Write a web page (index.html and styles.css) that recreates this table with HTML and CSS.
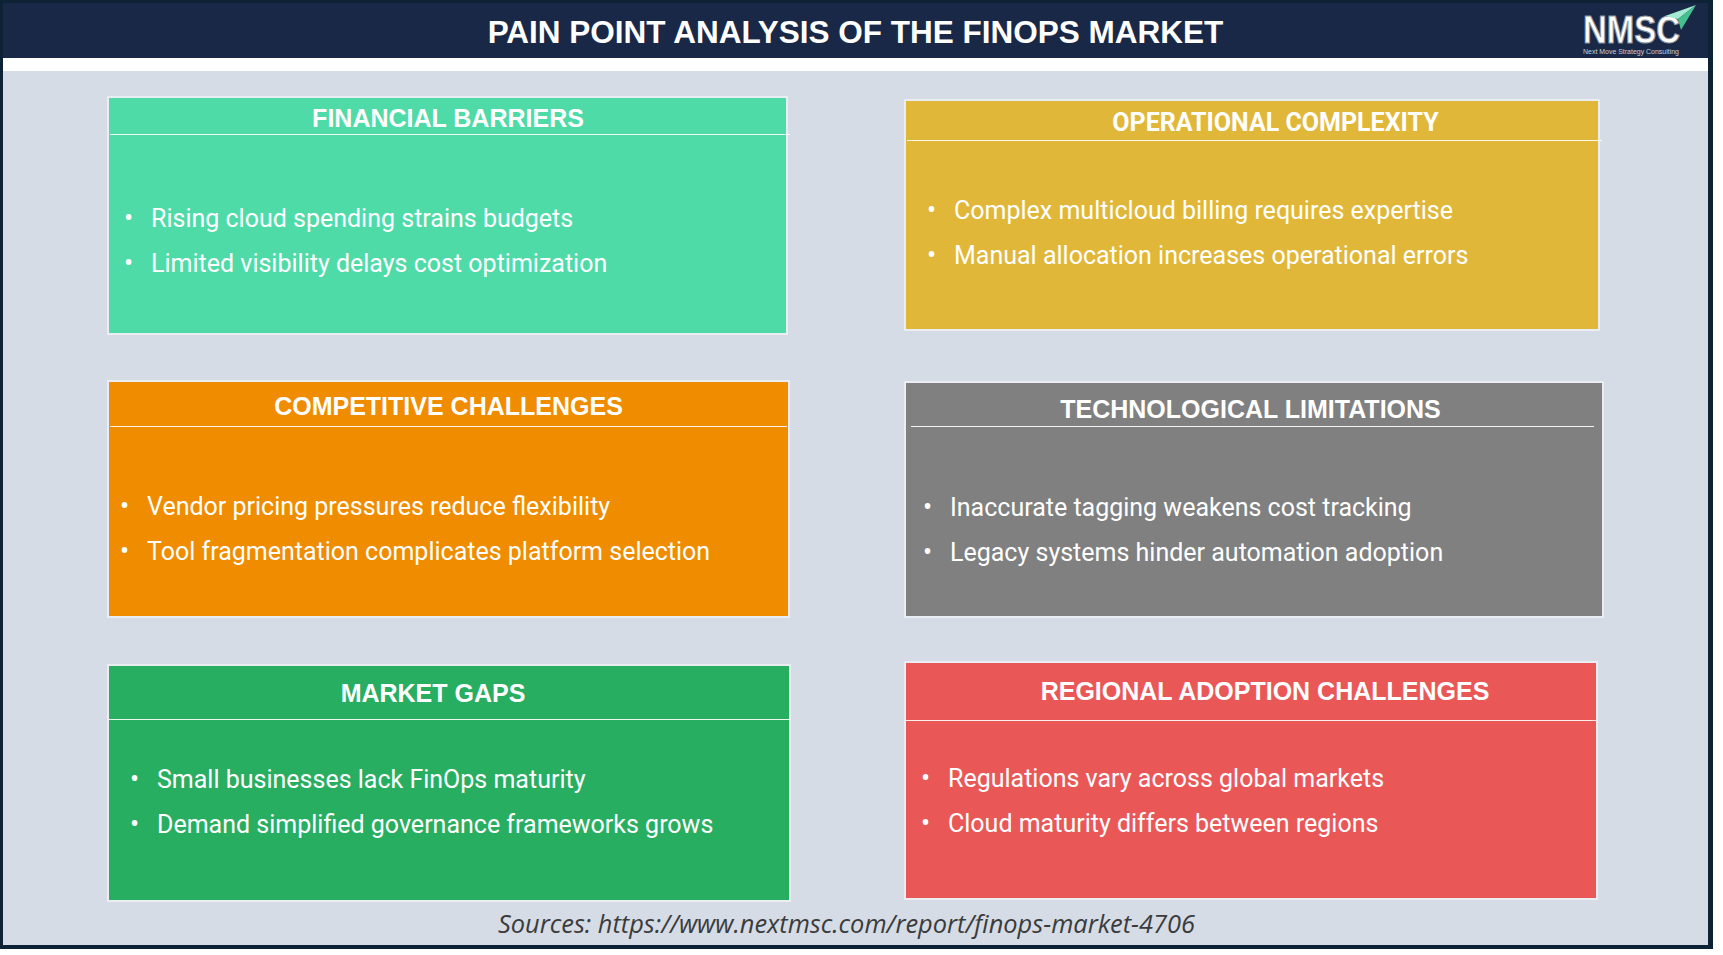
FILE: index.html
```html
<!DOCTYPE html>
<html lang="en">
<head>
<meta charset="utf-8">
<title>Pain Point Analysis of the FinOps Market</title>
<link rel="stylesheet" href="styles.css">
</head>
<body>
<div class="frame">
  <header class="topbar">
    <div class="topbar-side"></div>
    <h1 class="title">PAIN POINT ANALYSIS OF THE FINOPS MARKET</h1>
    <div class="topbar-side topbar-logo">
      <svg class="logo" width="126" height="55" viewBox="0 0 126 55" aria-label="NMSC logo">
        <text x="5" y="40" class="logo-word" textLength="97" lengthAdjust="spacingAndGlyphs">NMSC</text>
        <polygon points="118,2 87,13 100,16" fill="#a3ead0"/>
        <polygon points="118,2 100,16 103,27" fill="#45c08f"/>
        <text x="5" y="51" class="logo-tag" textLength="96" lengthAdjust="spacingAndGlyphs">Next Move Strategy Consulting</text>
      </svg>
    </div>
  </header>
  <div class="strip"></div>
  <main class="content">
    <div class="grid">
      <section class="card card-financial">
        <h2 class="card-title">FINANCIAL BARRIERS</h2>
        <ul class="points">
          <li><span class="dot">•</span>Rising cloud spending strains budgets</li>
          <li><span class="dot">•</span>Limited visibility delays cost optimization</li>
        </ul>
      </section>
      <section class="card card-operational">
        <h2 class="card-title">OPERATIONAL COMPLEXITY</h2>
        <ul class="points">
          <li><span class="dot">•</span>Complex multicloud billing requires expertise</li>
          <li><span class="dot">•</span>Manual allocation increases operational errors</li>
        </ul>
      </section>
      <section class="card card-competitive">
        <h2 class="card-title">COMPETITIVE CHALLENGES</h2>
        <ul class="points">
          <li><span class="dot">•</span>Vendor pricing pressures reduce flexibility</li>
          <li><span class="dot">•</span>Tool fragmentation complicates platform selection</li>
        </ul>
      </section>
      <section class="card card-tech">
        <h2 class="card-title">TECHNOLOGICAL LIMITATIONS</h2>
        <ul class="points">
          <li><span class="dot">•</span>Inaccurate tagging weakens cost tracking</li>
          <li><span class="dot">•</span>Legacy systems hinder automation adoption</li>
        </ul>
      </section>
      <section class="card card-gaps">
        <h2 class="card-title">MARKET GAPS</h2>
        <ul class="points">
          <li><span class="dot">•</span>Small businesses lack FinOps maturity</li>
          <li><span class="dot">•</span>Demand simplified governance frameworks grows</li>
        </ul>
      </section>
      <section class="card card-regional">
        <h2 class="card-title">REGIONAL ADOPTION CHALLENGES</h2>
        <ul class="points">
          <li><span class="dot">•</span>Regulations vary across global markets</li>
          <li><span class="dot">•</span>Cloud maturity differs between regions</li>
        </ul>
      </section>
    </div>
    <p class="sources">Sources: https://www.nextmsc.com/report/finops-market-4706</p>
  </main>
</div>
</body>
</html>
```
FILE: styles.css
```css
* { box-sizing: border-box; }

html, body {
  margin: 0;
  padding: 0;
  background: #ffffff;
}

body {
  width: 1723px;
  height: 955px;
  overflow: hidden;
  font-family: "Roboto", "Liberation Sans", sans-serif;
}

.frame {
  width: 1713px;
  height: 949px;
  border-style: solid;
  border-color: #0e2236;
  border-width: 3px 5px 4px 3px;
  display: flex;
  flex-direction: column;
  background: #d5dce5;
}

/* ---------- top bar ---------- */
.topbar {
  height: 55px;
  flex: none;
  background: #1a2848;
  display: grid;
  grid-template-columns: 1fr auto 1fr;
  align-items: start;
}

.title {
  margin: 0;
  padding-top: 3px;
  line-height: 52px;
  font-family: "Liberation Sans", Arial, sans-serif;
  font-weight: 700;
  font-size: 31.5px;
  color: #ffffff;
  white-space: nowrap;
}

.topbar-logo {
  display: flex;
  justify-content: flex-end;
  padding-right: 4px;
}

.logo { display: block; }

.logo-word {
  font-family: "Liberation Sans", Arial, sans-serif;
  font-weight: 700;
  font-size: 38px;
  fill: #ffffff;
  stroke: #8d939c;
  stroke-width: 1.1px;
}

.logo-tag {
  font-family: "Liberation Sans", Arial, sans-serif;
  font-size: 7px;
  fill: #c9ced6;
}

.strip {
  height: 13px;
  flex: none;
  background: #ffffff;
}

/* ---------- content ---------- */
.content {
  flex: 1;
  padding: 25px 0 0 104px;
  display: flex;
  flex-direction: column;
}

.grid {
  display: grid;
  grid-template-columns: 684px 703px;
  grid-auto-rows: 239px;
  column-gap: 113px;
  row-gap: 45px;
  align-items: start;
}

.card {
  border: 2px solid rgba(255, 255, 255, 0.5);
  background-clip: padding-box;
  display: flex;
  flex-direction: column;
  color: #ffffff;
  --hh: 37px;
  --tp: 8px;
  --tpl: 0px;
  --tpr: 0px;
  --bp: 60px;
  --bl: 16px;
  --lm: 1px;
  --rm: 1px;
}

.card-title {
  margin: 0 var(--rm) 0 var(--lm);
  height: var(--hh);
  padding: var(--tp) var(--tpr) 0 var(--tpl);
  border-bottom: 1px solid rgba(255, 255, 255, 0.9);
  font-family: "Liberation Sans", Arial, sans-serif;
  font-weight: 700;
  font-size: 25px;
  line-height: 25px;
  text-align: center;
  white-space: nowrap;
}

.points {
  list-style: none;
  margin: 0;
  padding: var(--bp) 0 0 var(--bl);
}

.points li {
  display: flex;
  font-family: "Roboto", "Liberation Sans", sans-serif;
  font-size: 25px;
  line-height: 45px;
  white-space: nowrap;
}

.dot {
  width: 27px;
  flex: none;
  font-size: 27px;
}

/* ---------- individual cards ---------- */
.card-financial {
  background-color: #4fdba7;
  width: 681px;
  height: 239px;
  --hh: 37px;
  --tp: 8px;
  --tpr: 4px;
  --bp: 61px;
  --bl: 15px;
  --rm: -4px;
}

.card-operational {
  background-color: #e1b739;
  width: 696px;
  height: 232px;
  margin-top: 3px;
  --hh: 40px;
  --tp: 9px;
  --tpl: 42px;
  --bp: 47px;
  --bl: 21px;
  --rm: -4px;
}

.card-operational .card-title {
  font-family: "Roboto", "Liberation Sans", sans-serif;
}

.card-competitive {
  background-color: #f08c00;
  width: 683px;
  height: 238px;
  --hh: 45px;
  --tp: 12px;
  --bp: 57px;
  --bl: 11px;
}

.card-tech {
  background-color: #808080;
  width: 700px;
  height: 237px;
  margin-top: 1px;
  --hh: 44px;
  --tp: 14px;
  --tpr: 4px;
  --bp: 58px;
  --bl: 17px;
  --lm: 5px;
  --rm: 8px;
}

.card-gaps {
  background-color: #28ae60;
  width: 684px;
  height: 238px;
  --hh: 54px;
  --tp: 15px;
  --tpr: 32px;
  --bp: 37px;
  --bl: 21px;
  --lm: 0px;
  --rm: 0px;
}

.card-regional {
  background-color: #ea5757;
  width: 694px;
  height: 239px;
  margin-top: -3px;
  --hh: 58px;
  --tp: 16px;
  --tpl: 28px;
  --bp: 35px;
  --bl: 15px;
  --lm: 0px;
  --rm: 0px;
}

/* ---------- sources ---------- */
.sources {
  margin: 5px 0 0 -104px;
  padding-right: 18px;
  font-family: "Open Sans", "Liberation Sans", sans-serif;
  font-style: italic;
  font-size: 25.4px;
  line-height: 30px;
  color: #3b3b3b;
  text-align: center;
  white-space: nowrap;
}
```
